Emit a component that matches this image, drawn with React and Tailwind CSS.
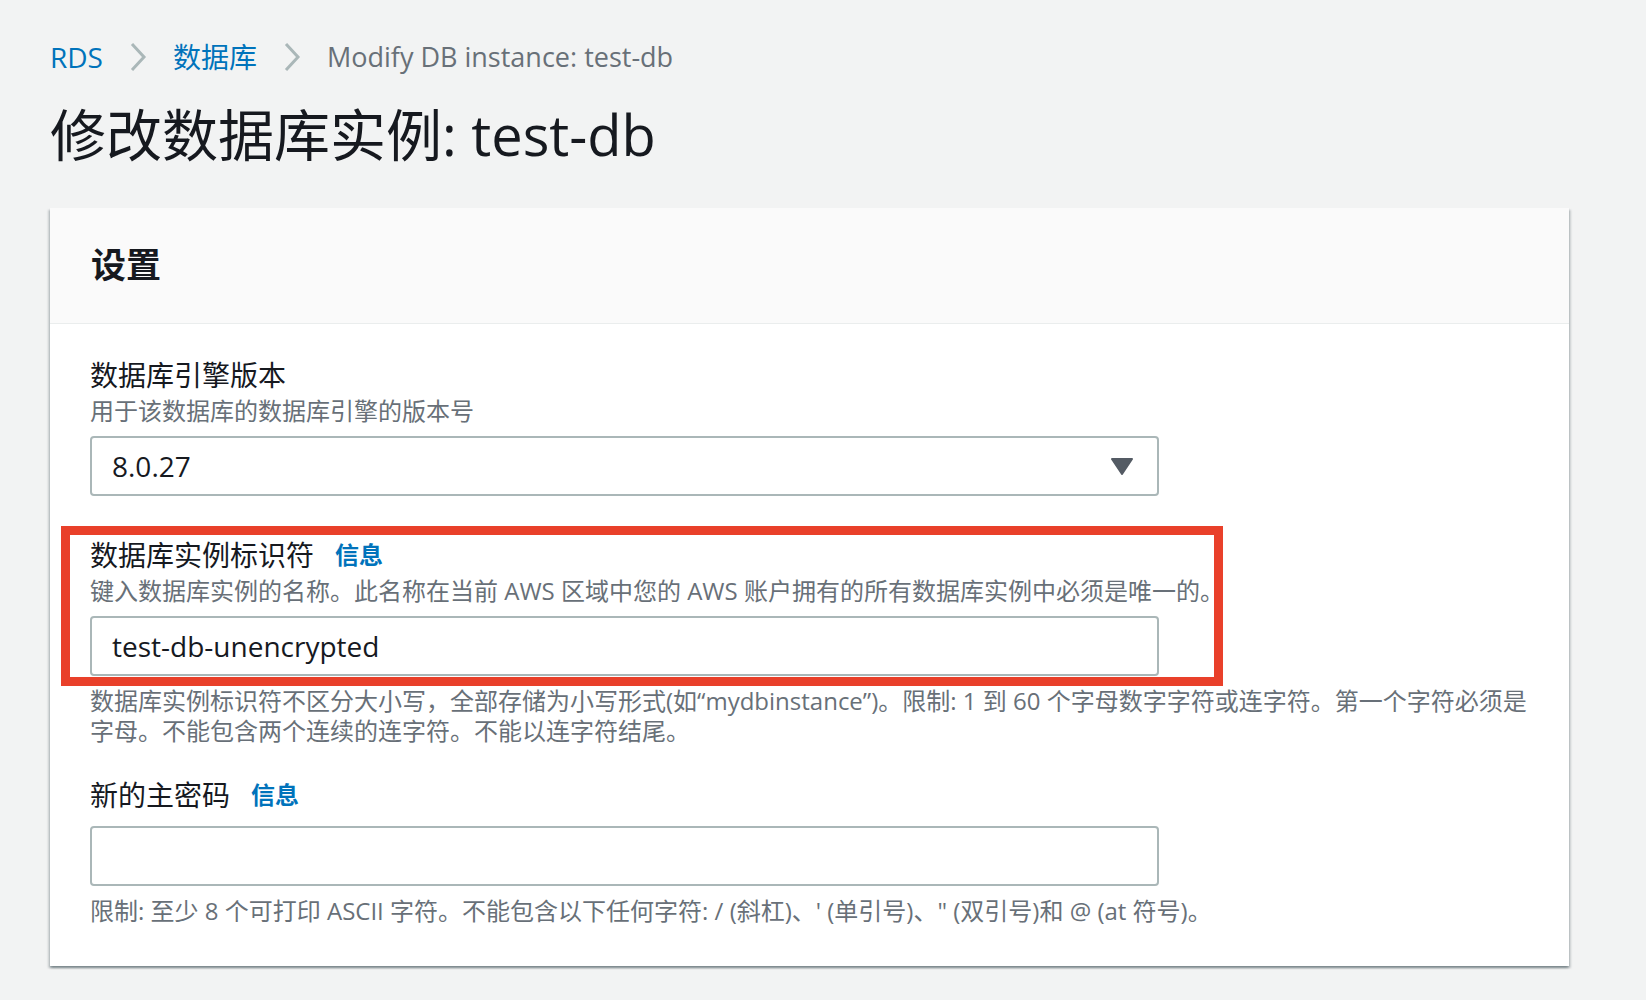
import React from "react";

const Chevron = () => (
  <svg width="18" height="30" viewBox="0 0 18 30" className="shrink-0">
    <polyline points="3,2 15,15 3,28" fill="none" stroke="#aab7b8" strokeWidth="3" />
  </svg>
);

const Caret = () => (
  <svg width="22" height="17" viewBox="0 0 22 17">
    <polygon points="1,1 21,1 11,16" fill="#545b64" stroke="#545b64" strokeWidth="2" strokeLinejoin="round" />
  </svg>
);

function Label({ children, info }) {
  return (
    <div className="flex items-center h-[36px]">
      <span className="text-[28px] text-[#16191f]">{children}</span>
      {info && <span className="ml-[21px] text-[24px] font-bold text-[#0073bb]">信息</span>}
    </div>
  );
}

function Hint({ children, className = "" }) {
  return <div className={"text-[24px] leading-[30px] text-[#687078] " + className}>{children}</div>;
}

export default function App() {
  return (
    <div className="min-h-screen bg-[#f2f3f3] pl-[50px] pr-[77px] pt-[39px] font-['Open_Sans','Noto_Sans_CJK_SC',sans-serif]">
      {/* breadcrumb */}
      <div className="flex items-center gap-[26px] h-[36px] text-[28px]">
        <span className="text-[#0073bb]">RDS</span>
        <Chevron />
        <span className="text-[#0073bb]">数据库</span>
        <Chevron />
        <span className="text-[27px] text-[#687078]">Modify DB instance: test-db</span>
      </div>

      <h1 className="mt-[25px] text-[56px] leading-[68px] text-[#16191f]">修改数据库实例: test-db</h1>

      <div className="mt-[40px] bg-white shadow-[0_2px_2px_0_rgba(0,28,36,0.3),2px_2px_2px_0_rgba(0,28,36,0.15),-2px_2px_2px_0_rgba(0,28,36,0.15)]">
        <div className="h-[116px] flex items-center px-[41px] bg-[#fafafa] border-b border-[#eaeded]">
          <h2 className="text-[35px] font-bold text-[#16191f]">设置</h2>
        </div>

        <div className="px-[40px] pt-[33px] pb-[40px]">
          {/* engine version */}
          <Label>数据库引擎版本</Label>
          <Hint className="mt-[3px]">用于该数据库的数据库引擎的版本号</Hint>
          <div className="mt-[10px] w-[1069px] h-[60px] border-2 border-[#aab7b8] rounded-[4px] flex items-center justify-between pl-[20px] pr-[24px]">
            <span className="text-[28px] text-[#16191f]">8.0.27</span>
            <Caret />
          </div>

          {/* identifier */}
          <div className="relative mt-[41px]">
            <Label info>数据库实例标识符</Label>
            <Hint className="mt-[3px] whitespace-nowrap">
              键入数据库实例的名称。此名称在当前 AWS 区域中您的 AWS 账户拥有的所有数据库实例中必须是唯一的。
            </Hint>
            <div className="mt-[10px] w-[1069px] h-[60px] border-2 border-[#aab7b8] rounded-[4px] flex items-center pl-[20px]">
              <span className="text-[28px] text-[#16191f]">test-db-unencrypted</span>
            </div>
            <div className="pointer-events-none absolute -left-[29px] -top-[11px] w-[1162px] -bottom-[10px] border-[9px] border-[#e9402a]" />
          </div>
          <div className="mt-[10px]">
            <Hint className="whitespace-nowrap">数据库实例标识符不区分大小写，全部存储为小写形式(如“mydbinstance”)。限制: 1 到 60 个字母数字字符或连字符。第一个字符必须是</Hint>
            <Hint className="whitespace-nowrap">字母。不能包含两个连续的连字符。不能以连字符结尾。</Hint>
          </div>

          {/* password */}
          <div className="mt-[31px]">
            <Label info>新的主密码</Label>
          </div>
          <div className="mt-[13px] w-[1069px] h-[60px] border-2 border-[#aab7b8] rounded-[4px]" />
          <Hint className="mt-[10px] whitespace-nowrap">
            限制: 至少 8 个可打印 ASCII 字符。不能包含以下任何字符: / (斜杠)、' (单引号)、" (双引号)和 @ (at 符号)。
          </Hint>
        </div>
      </div>
    </div>
  );
}
